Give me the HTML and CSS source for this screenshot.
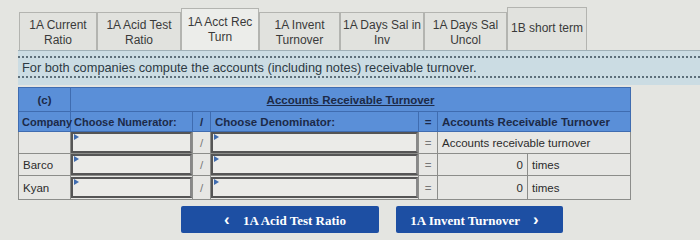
FILE: index.html
```html
<!DOCTYPE html>
<html lang="en">
<head>
    <meta charset="UTF-8">
    <title>Accounts Receivable Turnover</title>
    <link rel="stylesheet" href="styles.css">
</head>
<body>

<div class="tabs">
    <div class="tab t1">1A Current<br>Ratio</div>
    <div class="tab t2">1A Acid Test<br>Ratio</div>
    <div class="tab t3 active">1A Acct Rec<br>Turn</div>
    <div class="tab t4">1A Invent<br>Turnover</div>
    <div class="tab t5">1A Days Sal in<br>Inv</div>
    <div class="tab t6">1A Days Sal<br>Uncol</div>
    <div class="tab t7">1B short term</div>
</div>

<div class="band">
    <div class="notice">For both companies compute the accounts (including notes) receivable turnover.</div>
</div>

<table class="grid">
    <colgroup>
        <col class="w-co">
        <col class="w-num">
        <col class="w-op">
        <col class="w-den">
        <col class="w-eq">
        <col class="w-res">
        <col class="w-unit">
    </colgroup>
    <tr class="head top">
        <td class="center">(c)</td>
        <td colspan="6" class="center"><u>Accounts Receivable Turnover</u></td>
    </tr>
    <tr class="head">
        <td class="tight">Company</td>
        <td class="tight">Choose Numerator:</td>
        <td class="center">/</td>
        <td>Choose Denominator:</td>
        <td class="center">=</td>
        <td colspan="2">Accounts Receivable Turnover</td>
    </tr>
    <tr>
        <td></td>
        <td class="in"><div class="pick"></div></td>
        <td class="op">/</td>
        <td class="in"><div class="pick"></div></td>
        <td class="op">=</td>
        <td colspan="2">Accounts receivable turnover</td>
    </tr>
    <tr>
        <td>Barco</td>
        <td class="in"><div class="pick"></div></td>
        <td class="op">/</td>
        <td class="in"><div class="pick"></div></td>
        <td class="op">=</td>
        <td class="res">0</td>
        <td>times</td>
    </tr>
    <tr class="last">
        <td>Kyan</td>
        <td class="in"><div class="pick"></div></td>
        <td class="op">/</td>
        <td class="in"><div class="pick"></div></td>
        <td class="op">=</td>
        <td class="res">0</td>
        <td>times</td>
    </tr>
</table>

<div class="nav">
    <button class="btn prev"><span class="arrow">&lsaquo;</span> 1A Acid Test Ratio</button>
    <button class="btn next">1A Invent Turnover <span class="arrow">&rsaquo;</span></button>
</div>

</body>
</html>
```

FILE: styles.css
```css
body {
    margin: 0;
    background-color: #e4e5e1;
    font-family: "Liberation Sans", Arial, sans-serif;
    color: #2b2b2b;
}
.tabs {
    display: flex;
    align-items: flex-end;
    height: 50px;
    padding-left: 19px;
}
.tab {
    height: 38px;
    box-sizing: border-box;
    border: 1px solid #b3b4b0;
    border-bottom: none;
    background-color: #e1e2de;
    font-size: 12px;
    line-height: 15px;
    text-align: center;
    color: #3a3a3a;
    padding-top: 5px;
}
.tab.active {
    height: 42px;
    background-color: #ecedea;
    padding-top: 6px;
}
.t1 { width: 78px; }
.t2 { width: 84px; }
.t3 { width: 78px; }
.t4 { width: 81px; }
.t5 { width: 84px; }
.t6 { width: 83px; }
.t7 {
    width: 80px;
    height: 43px;
    padding-top: 13px;
}
.band {
    margin-left: 18px;
    height: 35px;
    background-color: #cbdce3;
    border-top: 1px solid #9fb0b7;
    padding-top: 5px;
    box-sizing: border-box;
}
.notice {
    border-top: 2px dotted #5d6f7a;
    border-bottom: 2px dotted #5d6f7a;
    padding: 2px 4px 1px;
    font-size: 12.8px;
    color: #2d3a44;
}
.grid {
    margin: 2px 0 0 18px;
    width: 612px;
    table-layout: fixed;
    border-collapse: collapse;
    font-size: 11.5px;
}
.w-co { width: 52px; }
.w-num { width: 122px; }
.w-op { width: 18px; }
.w-den { width: 208px; }
.w-eq { width: 19px; }
.w-res { width: 90px; }
.w-unit { width: 103px; }
.grid td {
    border: 1px solid #8c8d8a;
    padding: 0 4px;
    height: 21px;
    background-color: #e7e7e4;
    white-space: nowrap;
}
.grid .last td {
    height: 23px;
}
.grid .head td {
    background-color: #5a8fd8;
    border-color: #3f6cb0;
    color: #1c2a48;
    font-weight: bold;
    height: 19px;
}
.grid .head.top td {
    height: 23px;
}
.grid .head td.tight {
    padding: 0 1px 0 3px;
    font-size: 11px;
}
.center {
    text-align: center;
}
.op {
    text-align: center;
    color: #777;
}
.res {
    text-align: right;
}
.grid td.in {
    padding: 0;
}
.pick {
    position: relative;
    height: 17px;
    border: 2px solid #555;
    border-right-color: #888;
    background-color: #ebebe8;
}
.pick::before {
    content: "";
    position: absolute;
    left: 1px;
    top: 0;
    border-left: 5px solid #3f6cb0;
    border-top: 3px solid transparent;
    border-bottom: 3px solid transparent;
}
.nav {
    display: flex;
    gap: 17px;
    margin: 6px 0 0 181px;
}
.btn {
    height: 27px;
    border: none;
    border-radius: 2px;
    background-color: #1d4fa3;
    color: #fff;
    font-family: "Liberation Serif", serif;
    font-weight: bold;
    font-size: 13px;
}
.prev { width: 198px; }
.next { width: 167px; }
.arrow {
    font-family: "Liberation Sans", sans-serif;
    font-size: 17px;
    margin: 0 10px;
}
```
